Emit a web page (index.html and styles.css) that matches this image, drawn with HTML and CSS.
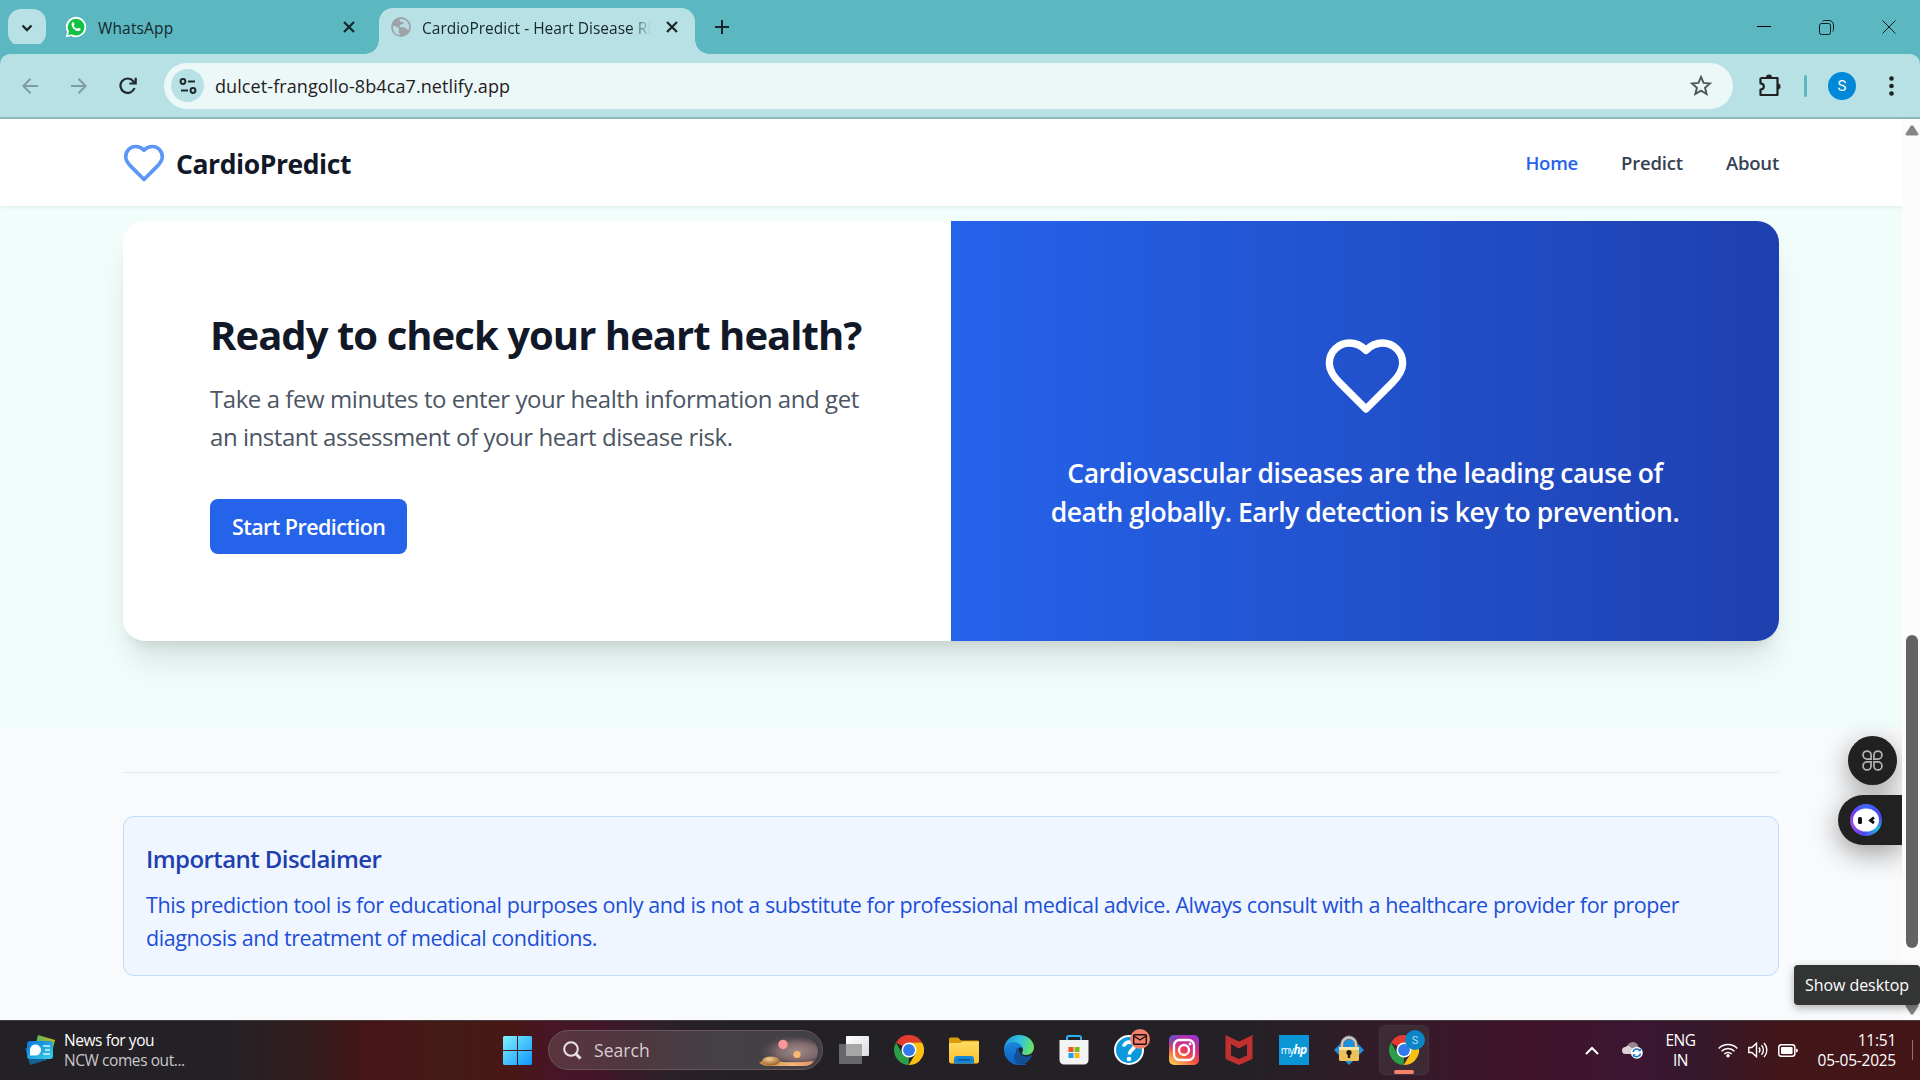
FILE: index.html
```html
<!DOCTYPE html>
<html lang="en">
<head>
<meta charset="utf-8">
<title>CardioPredict - Heart Disease Risk</title>
<link rel="stylesheet" href="styles.css">
</head>
<body>
<div class="screen">

  <div class="tabstrip">
    <button class="tab-search"><svg width="12" height="8" viewBox="0 0 12 8"><path d="M1.5 1.5 6 6l4.500-4.500" fill="none" stroke="#1b2426" stroke-width="2.300"/></svg></button>
    <div class="tab tab-idle">
      <svg class="favicon" width="22" height="22" viewBox="0 0 22 22"><path d="M.800 21.200 2.100 16A10.200 10.200 0 1 1 6.200 20Z" fill="#fff"/><path d="M3 19.200l1-3.800a8.300 8.300 0 1 1 2.800 2.800Z" fill="#0fc144"/><path d="M7.300 6.300c.6-.6 1.200-.4 1.500.2l.7 1.700c.1.500-.6 1.100-.8 1.500.8 1.500 1.900 2.500 3.500 3.100.5-.300.900-1.200 1.400-1.100l2 1c.3.400-.2 1.700-1.100 2.200-1.300.6-3.400-.1-5.300-1.700-2-1.800-3.600-4.400-1.900-6.900Z" fill="#fff"/></svg>
      <span class="tab-title">WhatsApp</span>
      <svg class="tab-close" width="12" height="12" viewBox="0 0 12 12"><path d="M1 1l10 10M11 1 1 11" stroke="#16282b" stroke-width="2.200"/></svg>
    </div>
    <div class="tab tab-active">
      <svg class="favicon" width="20" height="20" viewBox="0 0 20 20"><circle cx="10" cy="10" r="10" fill="#9ea3aa"/><path d="M9 2c-1 2 0 3 2 3 2.500 0 2 1.500.5 2.300-1 .6-3 .4-3 1.700 0 1 .5 1 2 1 2 0 4 .8 5.500 2.200 1 .8 2 .5 2-.7C19 6 15 1.500 9 2ZM2 9c2 0 4.500.5 6 2.500.8 1.200-.5 2-.3 3.200.2 1.300 1.500 2 .8 3.500C4.500 17.500 1.500 14 2 9Z" fill="#b9e1e5" opacity=".9"/></svg>
      <span class="tab-title tab-title-fade">CardioPredict - Heart Disease Ri</span>
      <svg class="tab-close" width="12" height="12" viewBox="0 0 12 12"><path d="M1 1l10 10M11 1 1 11" stroke="#1b2426" stroke-width="2.200"/></svg>
    </div>
    <svg class="new-tab" width="14" height="14" viewBox="0 0 14 14"><path d="M7 0v14M0 7h14" stroke="#16282b" stroke-width="2"/></svg>
    <div class="window-controls">
      <svg width="14" height="14" viewBox="0 0 14 14"><path d="M0 6.500h14" stroke="#000"/></svg>
      <svg width="15" height="15" viewBox="0 0 15 15" fill="none" stroke="#0d1a1c"><rect x=".5" y="3.500" width="11" height="11" rx="2"/><path d="M3.500 1.500c.5-.7 1-1 2-1h4.500a4.500 4.500 0 0 1 4.500 4.500v4.500c0 1-.3 1.500-1 2"/></svg>
      <svg width="14" height="14" viewBox="0 0 14 14"><path d="M.5.5l13 13M13.500.5l-13 13" stroke="#0d1a1c"/></svg>
    </div>
  </div>

  <div class="toolbar">
    <div class="nav-buttons">
      <svg width="16" height="16" viewBox="0 0 16 16" fill="none" stroke="#7f9da1" stroke-width="2"><path d="M16 8H1.500M8.500.800 1.300 8l7.200 7.200"/></svg>
      <svg width="16" height="16" viewBox="0 0 16 16" fill="none" stroke="#7f9da1" stroke-width="2"><path d="M0 8h14.500M7.500.800 14.700 8l-7.200 7.200"/></svg>
      <svg width="18" height="18" viewBox="0 0 18 18" fill="none" stroke="#1f2a2c" stroke-width="2.200"><path d="M15.500 11A7.200 7.200 0 1 1 14.300 4.200L16 6"/><path d="M16.700.800v5.700H10.500"/></svg>
    </div>
    <div class="omnibox">
      <span class="site-info"><svg width="18" height="16" viewBox="0 0 18 16" fill="none" stroke="#1f2a2c" stroke-width="2"><circle cx="4" cy="3.500" r="2.400"/><path d="M9 3.500h7M2 12.500h7"/><circle cx="14" cy="12.500" r="2.400"/></svg></span>
      <span class="url">dulcet-frangollo-8b4ca7.netlify.app</span>
      <svg class="star" width="22" height="22" viewBox="0 0 20 20"><path d="M10 1.800l2.300 5.400 5.900.5-4.500 3.900 1.400 5.700-5.100-3-5.100 3 1.400-5.700L1.800 7.700l5.900-.5Z" fill="none" stroke="#54585a" stroke-width="1.800"/></svg>
    </div>
    <div class="toolbar-actions">
      <svg width="23" height="23" viewBox="0 0 23 23"><path d="M2.500 4h17v6.500M19.500 14v7h-17v-5.500c2 0 3.300-1.400 3.300-3s-1.300-3-3.300-3V4M19.500 4v17" fill="none" stroke="#1f2022" stroke-width="2.200" stroke-linejoin="round"/><path d="M8 3.500a3 3 0 0 1 6 0ZM19.500 9.500a3 3 0 0 1 0 6Z" fill="#1f2022"/></svg>
      <span class="divider"></span>
      <span class="avatar">S</span>
      <svg width="5" height="20" viewBox="0 0 5 20" fill="#1f2022"><circle cx="2.500" cy="2.500" r="2.300"/><circle cx="2.500" cy="10" r="2.300"/><circle cx="2.500" cy="17.500" r="2.300"/></svg>
    </div>
  </div>

  <div class="viewport">
    <div class="page">
      <header class="site-header">
        <a class="brand"><svg class="brand-heart" viewBox="0 0 24 24"><path d="M19 14c1.490-1.460 3-3.210 3-5.500A5.500 5.500 0 0 0 16.500 3c-1.760 0-3 .5-4.500 2-1.500-1.500-2.740-2-4.500-2A5.500 5.500 0 0 0 2 8.500c0 2.300 1.500 4.050 3 5.500l7 7Z"/></svg><span>CardioPredict</span></a>
        <nav class="site-nav"><a class="home current">Home</a><a class="predict">Predict</a><a class="about">About</a></nav>
      </header>
      <section class="cta">
        <div class="cta-card">
          <div class="cta-copy">
            <h2>Ready to check your heart health?</h2>
            <p>Take a few minutes to enter your health information and get<br>an instant assessment of your heart disease risk.</p>
            <a class="btn">Start Prediction</a>
          </div>
          <div class="cta-fact">
            <svg class="fact-heart" viewBox="0 0 24 24"><path d="M19 14c1.490-1.460 3-3.210 3-5.500A5.500 5.500 0 0 0 16.500 3c-1.760 0-3 .5-4.500 2-1.500-1.500-2.740-2-4.500-2A5.500 5.500 0 0 0 2 8.500c0 2.300 1.500 4.050 3 5.500l7 7Z"/></svg>
            <p>Cardiovascular diseases are the leading cause of<br>death globally. Early detection is key to prevention.</p>
          </div>
        </div>
      </section>
      <footer class="site-footer">
        <div class="disclaimer">
          <h3>Important Disclaimer</h3>
          <p>This prediction tool is for educational purposes only and is not a substitute for professional medical advice. Always consult with a healthcare provider for proper<br>diagnosis and treatment of medical conditions.</p>
        </div>
      </footer>
      <div class="widget widget-apps"><svg width="21" height="21" viewBox="0 0 22 22" fill="none" stroke="#b4b4b6" stroke-width="1.800"><path d="M9.500 9.500H5.300a4.200 4.200 0 1 1 4.200-4.200ZM12.500 9.500V5.300a4.200 4.200 0 1 1 4.200 4.200ZM9.500 12.500v4.200a4.200 4.200 0 1 1-4.200-4.200ZM12.500 12.500h4.200a4.200 4.200 0 1 1-4.200 4.200Z"/></svg></div>
      <div class="widget widget-bot"><span class="bot-ring"><svg width="26" height="24" viewBox="0 0 26 24"><ellipse cx="13" cy="12" rx="13" ry="11.500" fill="#fff"/><rect x="5" y="9" width="4" height="7" rx="1.500" fill="#111"/><path d="M21 9.500 17.500 12.500l3.500 2.500" fill="none" stroke="#111" stroke-width="2.800"/></svg></span></div>
    </div>
    <div class="scrollbar">
      <svg width="14" height="11" viewBox="0 0 14 11"><path d="M5.500 1.200Q7-.5 8.500 1.200L13.200 8.500Q14 10.500 12 10.500H2Q0 10.500.800 8.500Z" fill="#858585"/></svg>
      <span class="thumb"></span>
      <svg width="14" height="11" viewBox="0 0 14 11"><path d="M5.500 9.800Q7 11.500 8.500 9.800L13.200 2.500Q14 .5 12 .5H2Q0 .5.800 2.500Z" fill="#858585"/></svg>
    </div>
  </div>

  <div class="taskbar">
    <div class="news">
      <svg width="31" height="31" viewBox="0 0 31 31"><defs><linearGradient id="nb" x1="0" x2="1" y1="0" y2="1"><stop offset="0" stop-color="#0a74dc"/><stop offset="1" stop-color="#35d3ea"/></linearGradient><linearGradient id="ng"><stop offset="0" stop-color="#57b567"/><stop offset="1" stop-color="#c3b81c"/></linearGradient></defs><path d="M13 0l17 5-3 12-17-5Z" fill="url(#ng)"/><path d="M0 13l5 17 17-5-3-12Z" fill="#12618f"/><rect x="2" y="6" width="26" height="18" rx="3" fill="url(#nb)"/><path d="M5 20.500V14.500a5.500 5.500 0 1 1 5.500 6Z" fill="#fff"/><path d="M18 11h7M20 15h5M18 19h7" stroke="#d9f4ff" stroke-width="1.600"/></svg>
      <div class="news-text"><span class="news-title">News for you</span><span class="news-sub">NCW comes out...</span></div>
    </div>
    <div class="apps">
      <svg class="start" width="29" height="29" viewBox="0 0 29 29"><defs><linearGradient id="w" x1="0" y1="0" x2="1" y2="1"><stop offset="0" stop-color="#80f2ff"/><stop offset="1" stop-color="#0d95fb"/></linearGradient></defs><path d="M1 0h13v14H0V1ZM15 0h13l1 1v13H15ZM0 15h14v14H1l-1-1ZM15 15h14v13l-1 1H15Z" fill="url(#w)"/></svg>
      <div class="search">
        <svg width="19" height="19" viewBox="0 0 19 19" fill="none" stroke="#e9e2e6" stroke-width="2"><circle cx="8" cy="8" r="6.800"/><path d="M13 13l4.500 4.500" stroke-width="3"/></svg>
        <span class="search-label">Search</span>
        <svg class="search-art" width="66" height="34" viewBox="0 0 66 34"><defs><radialGradient id="sky" cx=".68" cy=".55" r=".62"><stop offset="0" stop-color="#a08b87"/><stop offset=".5" stop-color="#7e686b"/><stop offset="1" stop-color="#4a4246" stop-opacity="0"/></radialGradient><linearGradient id="sand" x1="0" x2="1"><stop offset="0" stop-color="#c88645"/><stop offset=".6" stop-color="#f4b777"/><stop offset="1" stop-color="#e98e6a"/></linearGradient><radialGradient id="rock" cx=".4" cy=".3" r=".7"><stop offset="0" stop-color="#f5cd90"/><stop offset="1" stop-color="#9a622c"/></radialGradient></defs><path d="M0 10C10 2 25 2 50 4q15 3 15 15-1 10-9 12H12Z" fill="url(#sky)"/><circle cx="30" cy="11.500" r="4.700" fill="#fb979b"/><circle cx="44" cy="21.500" r="3.600" fill="#fbb972"/><path d="M6 29q10-2 24 0 16 1 31-1-3 5-10 5H17Q8 33 6 29Z" fill="url(#sand)"/><ellipse cx="18" cy="28" rx="9" ry="4.500" fill="url(#rock)"/></svg>
      </div>
      <div class="app"><svg width="30" height="28" viewBox="0 0 30 28"><defs><linearGradient id="tv" x1="0" y1="0" x2="1" y2="1"><stop offset="0" stop-color="#fff"/><stop offset="1" stop-color="#dcdcdc"/></linearGradient></defs><rect x="7" y="0" width="23" height="20" rx="1" fill="url(#tv)"/><rect x="0" y="8" width="23" height="20" rx="1" fill="#6f6f72" opacity=".9"/><path d="M7 8h16v12H7Z" fill="#a6a6a8"/></svg></div>
      <div class="app"><svg width="30" height="30" viewBox="0 0 48 48"><path d="M24 24 3.200 12A24 24 0 0 1 44.800 12H24Z" fill="#e33b2e"/><path d="M24 24 23.500 48A24 24 0 0 1 3.200 12L13.600 30Z" fill="#2a9e49"/><path d="M24 12h20.800A24 24 0 0 1 23.500 48L34.400 30Z" fill="#fcc012"/><circle cx="24" cy="24" r="12" fill="#fff"/><circle cx="24" cy="24" r="9.500" fill="#2f7bee"/></svg></div>
      <div class="app"><svg width="30" height="27" viewBox="0 0 30 27"><defs><linearGradient id="fo" x1="0" y1="0" x2="0" y2="1"><stop offset="0" stop-color="#ffdc62"/><stop offset="1" stop-color="#fbc02f"/></linearGradient></defs><path d="M0 2a1.500 1.500 0 0 1 1.500-1.500H9L12 3.500h17l1 1V14H0Z" fill="#db9c09"/><path d="M0 6h11l3-1.500h16V25l-1.500 1.500h-27L0 25Z" fill="url(#fo)"/><path d="M5 26.500V22a3 3 0 0 1 3-3h14a3 3 0 0 1 3 3v4.500Z" fill="#1486d8"/><path d="M9 22.800h12" stroke="#0b529a" stroke-width="1.500"/></svg></div>
      <div class="app"><svg width="30" height="30" viewBox="0 0 30 30"><defs><linearGradient id="e1" x1="0" y1=".3" x2="1" y2=".5"><stop offset="0" stop-color="#1d9bdd"/><stop offset=".55" stop-color="#36c5d8"/><stop offset="1" stop-color="#6be55c"/></linearGradient><linearGradient id="e2" x1="0" y1="0" x2="0" y2="1"><stop offset="0" stop-color="#1a86dd"/><stop offset="1" stop-color="#0d5fc0"/></linearGradient></defs><path d="M0 15C0 7 6 0 15 0s15 6 15 12.500c0 4.500-3.500 7.500-7.500 7.500-3 0-5-1-4.500-2.500 1.500-1.500 1.500-6-2.500-7.500Z" fill="url(#e1)"/><path d="M0 15c1-5 5-8 9.500-8 5 0 9 3.500 9.500 7-2-2.500-7-2-7 3.500 0 5 5 9 10.500 12.500-9 2.500-22-2-22.500-15Z" fill="url(#e2)"/><path d="M12 17.500c0-2.500 1-4.500 3.500-5.500-2 2 .5 9.500 7 9.500 2.500 0 4-1 5-1.500.8 0 .8.500.5 1C26 25.500 21 30 16 30c-5-2.500-8-7.500-4-12.500Z" fill="#124f93"/></svg></div>
      <div class="app"><svg width="30" height="30" viewBox="0 0 30 30"><path d="M8 6V3a2 2 0 0 1 2-2h10a2 2 0 0 1 2 2v3" fill="none" stroke="#28b4ef" stroke-width="2"/><path d="M.5 5h29v20a4.500 4.500 0 0 1-4.500 4.500H5A4.500 4.500 0 0 1 .5 25Z" fill="#f3f3f3"/><path d="M9.500 12h5v5h-5Z" fill="#f1511b"/><path d="M15.500 12h5v5h-5Z" fill="#80b918"/><path d="M9.500 18h5v5h-5Z" fill="#1aa3ec"/><path d="M15.500 18h5v5h-5Z" fill="#fbb809"/></svg></div>
      <div class="app app-badged"><svg width="30" height="30" viewBox="0 0 30 30"><circle cx="15" cy="15" r="14" fill="#0a9add" stroke="#fff" stroke-width="2"/><path d="M10 11.500c0-6 11-5.500 10.500-.5-.3 3.500-5.200 4-5.200 8.500" fill="none" stroke="#fff" stroke-width="3.600"/><circle cx="15" cy="24" r="2.300" fill="#fff"/></svg><span class="badge badge-mail"><svg width="14" height="11" viewBox="0 0 14 11" fill="none" stroke="#1b1012" stroke-width="1.400"><rect x=".7" y=".7" width="12.600" height="9.600" rx="1"/><path d="M1 2l6 4 6-4"/></svg></span></div>
      <div class="app"><svg width="30" height="30" viewBox="0 0 30 30"><defs><linearGradient id="ig" x1=".2" y1="1" x2=".8" y2="0"><stop offset="0" stop-color="#fdc553"/><stop offset=".35" stop-color="#f5553c"/><stop offset=".65" stop-color="#d62a82"/><stop offset="1" stop-color="#9a35c9"/></linearGradient><radialGradient id="ib" cx="0" cy="0" r=".6"><stop offset="0" stop-color="#3c5fdc"/><stop offset="1" stop-color="#8a3ad0" stop-opacity="0"/></radialGradient></defs><rect width="30" height="30" rx="5" fill="url(#ig)"/><rect width="30" height="30" rx="5" fill="url(#ib)"/><g fill="none" stroke="#fff" stroke-width="2.300"><rect x="5" y="5" width="20" height="20" rx="5.500"/><circle cx="15" cy="15" r="5"/></g><circle cx="21" cy="9" r="1.500" fill="#fff"/></svg></div>
      <div class="app"><svg width="28" height="30" viewBox="0 0 28 30"><path d="M.5 0 14 6.500 27.500 0v24L14 30 .5 24Z" fill="#c0302f"/><path d="M6 9l8 4.500L22 9v11.500L14 24l-8-3.500Z" fill="#252126"/></svg></div>
      <div class="app"><span class="myhp">my<b>hp</b></span></div>
      <div class="app"><svg width="30" height="30" viewBox="0 0 30 30"><path d="M15 0 30 15 15 30 0 15Z" fill="#1e90e0"/><path d="M8 13V9.500a7 7 0 0 1 14 0V13" fill="none" stroke="#6b6b6b" stroke-width="4"/><path d="M8 13V9.500a7 7 0 0 1 14 0V13" fill="none" stroke="#c9c9c4" stroke-width="2.400"/><rect x="5" y="12" width="20" height="14" rx="1.500" fill="#ecc15a"/><path d="M5 12h20v3H5Z" fill="#f8e3a0"/><circle cx="15" cy="17.500" r="2.600" fill="#1d1608"/><path d="M13.800 18h2.400v5h-2.400Z" fill="#1d1608"/></svg></div>
      <div class="app app-badged app-open"><svg width="30" height="30" viewBox="0 0 48 48"><path d="M24 24 3.200 12A24 24 0 0 1 44.800 12H24Z" fill="#e33b2e"/><path d="M24 24 23.500 48A24 24 0 0 1 3.200 12L13.600 30Z" fill="#2a9e49"/><path d="M24 12h20.800A24 24 0 0 1 23.500 48L34.400 30Z" fill="#fcc012"/><circle cx="24" cy="24" r="12" fill="#fff"/><circle cx="24" cy="24" r="9.500" fill="#2f7bee"/></svg><span class="badge badge-profile">S</span></div>
    </div>
    <div class="tray">
      <svg width="14" height="9" viewBox="0 0 14 9"><path d="M1 8l6-6 6 6" fill="none" stroke="#fff" stroke-width="2"/></svg>
      <svg class="cloud" width="21" height="18" viewBox="0 0 21 18"><path d="M5 6a6 6 0 0 1 11-2q1 4-1 9H5Z" fill="#98868f"/><path d="M3.500 13a3.500 3.500 0 0 1 0-7q2-2 4.500-.5L12 9v4Z" fill="#dccfd6"/><circle cx="14.800" cy="11.800" r="6" fill="#fff"/><path d="M11 11a4 4 0 0 1 7-1.500M18.600 12.500a4 4 0 0 1-7 1.700" fill="none" stroke="#1877c8" stroke-width="1.600"/><path d="M18.800 7.300v3h-3ZM10.800 16.200v-3h3Z" fill="#1877c8"/></svg>
      <div class="lang"><span>ENG</span><span>IN</span></div>
      <div class="status">
        <svg width="20" height="15" viewBox="0 0 20 15" fill="none" stroke="#fff" stroke-width="1.500"><path d="M.7 5.500a13 13 0 0 1 18.600 0M3.500 8.300a9 9 0 0 1 13 0M6.300 11a5.200 5.200 0 0 1 7.400 0"/><circle cx="10" cy="12.800" r="1.700" fill="#fff" stroke="none"/></svg>
        <svg width="20" height="16" viewBox="0 0 20 16" fill="none" stroke="#fff" stroke-width="1.400"><path d="M.8 5.500h3L8.500 1.300v13.400L3.800 10.500h-3Z"/><path d="M11 5.500a4 4 0 0 1 0 5M13.500 3.200a7 7 0 0 1 0 9.600M16 1a10 10 0 0 1 0 14"/></svg>
        <svg width="20" height="13" viewBox="0 0 20 13"><rect x=".8" y=".8" width="16" height="11.400" rx="2.500" fill="none" stroke="#fff" stroke-width="1.500"/><rect x="3" y="3" width="11.600" height="7" rx="1" fill="#fff"/><path d="M18 4.500q2 .3 2 2t-2 2Z" fill="#fff"/></svg>
      </div>
      <div class="clock"><span>11:51</span><span>05-05-2025</span></div>
      <span class="peek"></span>
    </div>
  </div>
  <div class="tooltip">Show desktop</div>
</div>
</body>
</html>
```
FILE: styles.css
```css
* { box-sizing: border-box; margin: 0; }
body { font-family: "Open Sans", "Noto Sans", sans-serif; }
svg { display: block; flex: none; }

.screen {
  position: relative;
  display: flex;
  flex-direction: column;
  width: 1920px;
  height: 1080px;
  overflow: hidden;
}

/* Browser tabs */
.tabstrip { display: flex; height: 54px; padding-left: 8px; background: #5bb8c1; }
.tab-search {
  display: flex; align-items: center; justify-content: center;
  width: 38px; height: 37px; margin-top: 9px;
  border: 0; border-radius: 13px; background: #b8e1e5;
}
.tab { display: flex; align-items: center; height: 46px; margin-top: 8px; padding-bottom: 8px; color: #17272a; font-size: 15.5px; }
.tab-idle { width: 333px; padding-left: 19px; }
.tab-idle .tab-title { width: 245px; margin-left: 11px; letter-spacing: .15px; padding-top: 2px; }
.tab-active {
  position: relative;
  width: 316px; padding-left: 12px;
  border-radius: 14px 14px 0 0; background: #b8e1e5;
}
.tab-active::before, .tab-active::after {
  content: ""; position: absolute; bottom: 0; width: 14px; height: 14px;
}
.tab-active::before { left: -14px; background: radial-gradient(circle at 0 0, transparent 13.5px, #b8e1e5 14px); }
.tab-active::after { right: -14px; background: radial-gradient(circle at 100% 0, transparent 13.5px, #b8e1e5 14px); }
.tab-title { white-space: nowrap; }
.tab-title-fade {
  width: 230px; margin: 0 14px 0 11px; padding-top: 2px;
  mask-image: linear-gradient(90deg, #000 208px, transparent 229px);
}
.new-tab { margin: 20px 0 0 20px; }
.window-controls { display: flex; align-items: center; gap: 48px; height: 54px; margin-left: auto; padding-right: 24px; }

/* Address bar */
.toolbar {
  display: flex; align-items: center;
  height: 65px; padding: 0 26px 0 22px;
  border-bottom: 2px solid #8fb6bb;
  border-radius: 10px 10px 0 0;
  background: #b8e1e5;
  box-shadow: 0 -10px 0 0 #5bb8c1;
}
.nav-buttons { display: flex; align-items: center; gap: 32.5px; width: 142px; }
.omnibox {
  display: flex; align-items: center;
  width: 1569px; height: 46px; padding: 0 21px 0 7px;
  border-radius: 23px; background: #ecf8f8;
}
.site-info { display: flex; align-items: center; justify-content: center; width: 33px; height: 33px; border-radius: 50%; background: #b8e1e5; }
.url { flex: 1; margin-left: 11px; color: #1f2022; font-size: 18px; letter-spacing: .09px; }
.toolbar-actions { display: flex; align-items: center; margin-left: 25px; }
.divider { width: 3px; height: 22px; margin: 0 21px 0 23px; border-radius: 2px; background: #5bb8c1; }
.avatar { width: 28px; height: 28px; margin-right: 33px; border-radius: 50%; background: #0288d8; color: #fff; font: 15px/28px Roboto, sans-serif; text-align: center; }

/* Page */
.viewport { display: flex; height: 901px; }
.page { position: relative; display: flex; flex-direction: column; width: 1902px; overflow: hidden; background: #f9fafb; }
.site-header {
  position: relative; z-index: 1;
  display: flex; align-items: center; justify-content: space-between;
  height: 87px; padding: 0 123px;
  background: #fff;
  box-shadow: 0 1px 4px rgba(0, 0, 0, .08);
}
.brand { display: flex; align-items: center; gap: 10px; margin-left: -1px; color: #111827; font-size: 26.5px; font-weight: 700; letter-spacing: -.42px; }
.brand span { padding-top: 2px; }
.brand-heart { width: 44px; height: 44px; fill: none; stroke: #5b97f9; stroke-width: 2; stroke-linecap: round; stroke-linejoin: round; }
.site-nav { display: flex; gap: 43px; color: #374151; font-size: 18.5px; font-weight: 600; letter-spacing: -.2px; }
.current { color: #2563eb; }
.cta { height: 522px; padding: 15px 123px 0; background: #f0fdfa; }
.cta-card {
  display: grid; grid-template-columns: 1fr 1fr;
  height: 420px; overflow: hidden;
  border-radius: 22px; background: #fff;
  box-shadow: 0 27px 34px -7px rgba(0, 0, 0, .1), 0 11px 14px -8px rgba(0, 0, 0, .1);
}
.cta-copy { display: flex; flex-direction: column; justify-content: center; align-items: flex-start; padding: 0 0 2px 87px; }
.cta-copy h2 { color: #111827; font-size: 40px; line-height: 55px; letter-spacing: -.95px; white-space: nowrap; }
.cta-copy p { margin: 18px 0 42px; color: #4b5563; font-size: 24px; line-height: 38.5px; letter-spacing: -.44px; white-space: nowrap; }
.btn { height: 55px; padding: 0 22px; border-radius: 8px; background: #2563eb; color: #fff; font-size: 21.5px; font-weight: 600; line-height: 55px; letter-spacing: -.56px; }
.cta-fact {
  display: flex; flex-direction: column; align-items: center; justify-content: center; gap: 33px;
  background: linear-gradient(90deg, #2563eb, #1e40af);
  color: #fff; text-align: center;
}
.fact-heart { width: 88px; height: 88px; margin-left: 1px; fill: none; stroke: #fff; stroke-width: 2; stroke-linecap: round; stroke-linejoin: round; }
.cta-fact p { padding-top: 1px; margin-bottom: -1px; font-size: 26.5px; font-weight: 600; line-height: 38.5px; letter-spacing: -.46px; white-space: nowrap; }
.site-footer { margin: 44px 123px 0; padding-top: 43px; border-top: 1px solid #e5e7eb; }
.disclaimer { height: 160px; padding: 23px 22px; border: 1px solid #bfdbfe; border-radius: 11px; background: #eff6ff; }
.disclaimer h3 { margin-bottom: 10px; color: #1e40af; font-size: 24px; font-weight: 600; line-height: 38px; letter-spacing: -.58px; }
.disclaimer p { color: #1d4ed8; font-size: 21.5px; line-height: 33px; letter-spacing: -.41px; white-space: nowrap; }

/* Floating assistant widgets */
.widget { position: absolute; right: 0; display: flex; align-items: center; background: #212121; box-shadow: 0 8px 28px rgba(0, 0, 0, .38); }
.widget-apps { top: 617px; right: 5px; justify-content: center; width: 49px; height: 49px; padding: 0 1px 1px 0; border-radius: 50%; }
.widget-bot { top: 676px; width: 64px; height: 50px; padding-left: 12px; border-radius: 25px 0 0 25px; }
.bot-ring { display: flex; align-items: center; justify-content: center; width: 32px; height: 32px; border-radius: 50%; background: conic-gradient(#3d6bfb, #4a3ff0 80deg, #26b7e6 125deg, #4f46f5 190deg, #a24be0 250deg, #6a3df0 300deg, #3d6bfb); }

.scrollbar { display: flex; flex-direction: column; align-items: center; width: 18px; padding: 6px 0 5px 2px; background: #fcfcfc; }
.thumb { width: 12px; height: 313px; margin: 499px 0 auto; border-radius: 6px; background: #636363; }

/* Taskbar */
.taskbar {
  display: flex; align-items: center;
  height: 60px; padding-bottom: 1px; border-top: 1px solid #413b3c;
  background: linear-gradient(90deg, #242126 0, #242126 230px, #301d1e 300px, #481517 375px, #431b16 450px, #481716 510px, #471528 560px, #421628 600px, #2b2128 670px, #242126 730px, #242126 1250px, #351b29 1400px, #3f142a 1520px, #3c1632 1640px, #35182c 1700px, #431619 1790px, #441517 1920px);
  color: #fff; font-size: 15.5px;
}
.news { display: flex; align-items: center; gap: 8px; width: 503px; padding-left: 25px; }
.news-text { display: flex; flex-direction: column; line-height: 20px; letter-spacing: -.43px; padding-bottom: 1px; }
.news-sub { color: #c9c7c9; }
.apps { display: flex; align-items: center; }
.search {
  display: flex; align-items: center;
  width: 275px; height: 40px; margin: 0 3px 0 16px; padding: 0 3px 0 14px;
  border: 1px solid #69555c; border-radius: 20px;
  background: linear-gradient(90deg, #5a343f, #50373f 30%, #454045 60%, #414044);
}
.search-label { flex: 1; margin-left: 12px; color: #d8cdd2; font-size: 17.5px; letter-spacing: .05px; }
.app { position: relative; display: flex; align-items: center; justify-content: center; width: 55px; height: 50px; }
.app-open { width: 50px; margin-left: 3px; border: 1px solid #473340; border-radius: 6px; background: #3c2a35; }
.app-open::after { content: ""; position: absolute; bottom: 0; left: 14px; width: 20px; height: 4px; border-radius: 2px; background: #f4836a; }
.badge { position: absolute; top: 4px; left: 28px; display: flex; align-items: center; justify-content: center; width: 20px; height: 20px; border-radius: 50%; }
.badge-mail { left: 29px; background: #f4806a; }
.badge-profile { left: 25px; background: #0b84c8; color: #b5dcf2; font: 11px Roboto, sans-serif; }
.myhp { width: 30px; height: 30px; background: #0a96d6; color: #fff; font-size: 10px; line-height: 29px; letter-spacing: -.8px; text-align: center; white-space: nowrap; }
.myhp b { font-size: 12px; font-style: italic; }
.tray { display: flex; align-items: center; margin-left: auto; padding-right: 7px; }
.cloud { margin: 0 23px 0 23px; }
.lang { display: flex; flex-direction: column; width: 29px; line-height: 20px; letter-spacing: -.5px; align-items: center; }
.status { display: flex; align-items: center; gap: 10px; margin: 0 20px 0 23px; }
.clock { display: flex; flex-direction: column; align-items: flex-end; width: 78px; line-height: 20px; letter-spacing: -.25px; padding-bottom: 1px; white-space: nowrap; }
.peek { width: 1px; height: 20px; margin-left: 16px; background: #8d7577; }

.tooltip {
  position: absolute; top: 965px; left: 1794px;
  width: 126px; height: 40px; padding-left: 11px;
  border-radius: 4px; background: #333434; color: #fff;
  font-size: 16px; line-height: 41px; letter-spacing: -.06px;
  box-shadow: 0 3px 8px rgba(0, 0, 0, .3);
}
```
